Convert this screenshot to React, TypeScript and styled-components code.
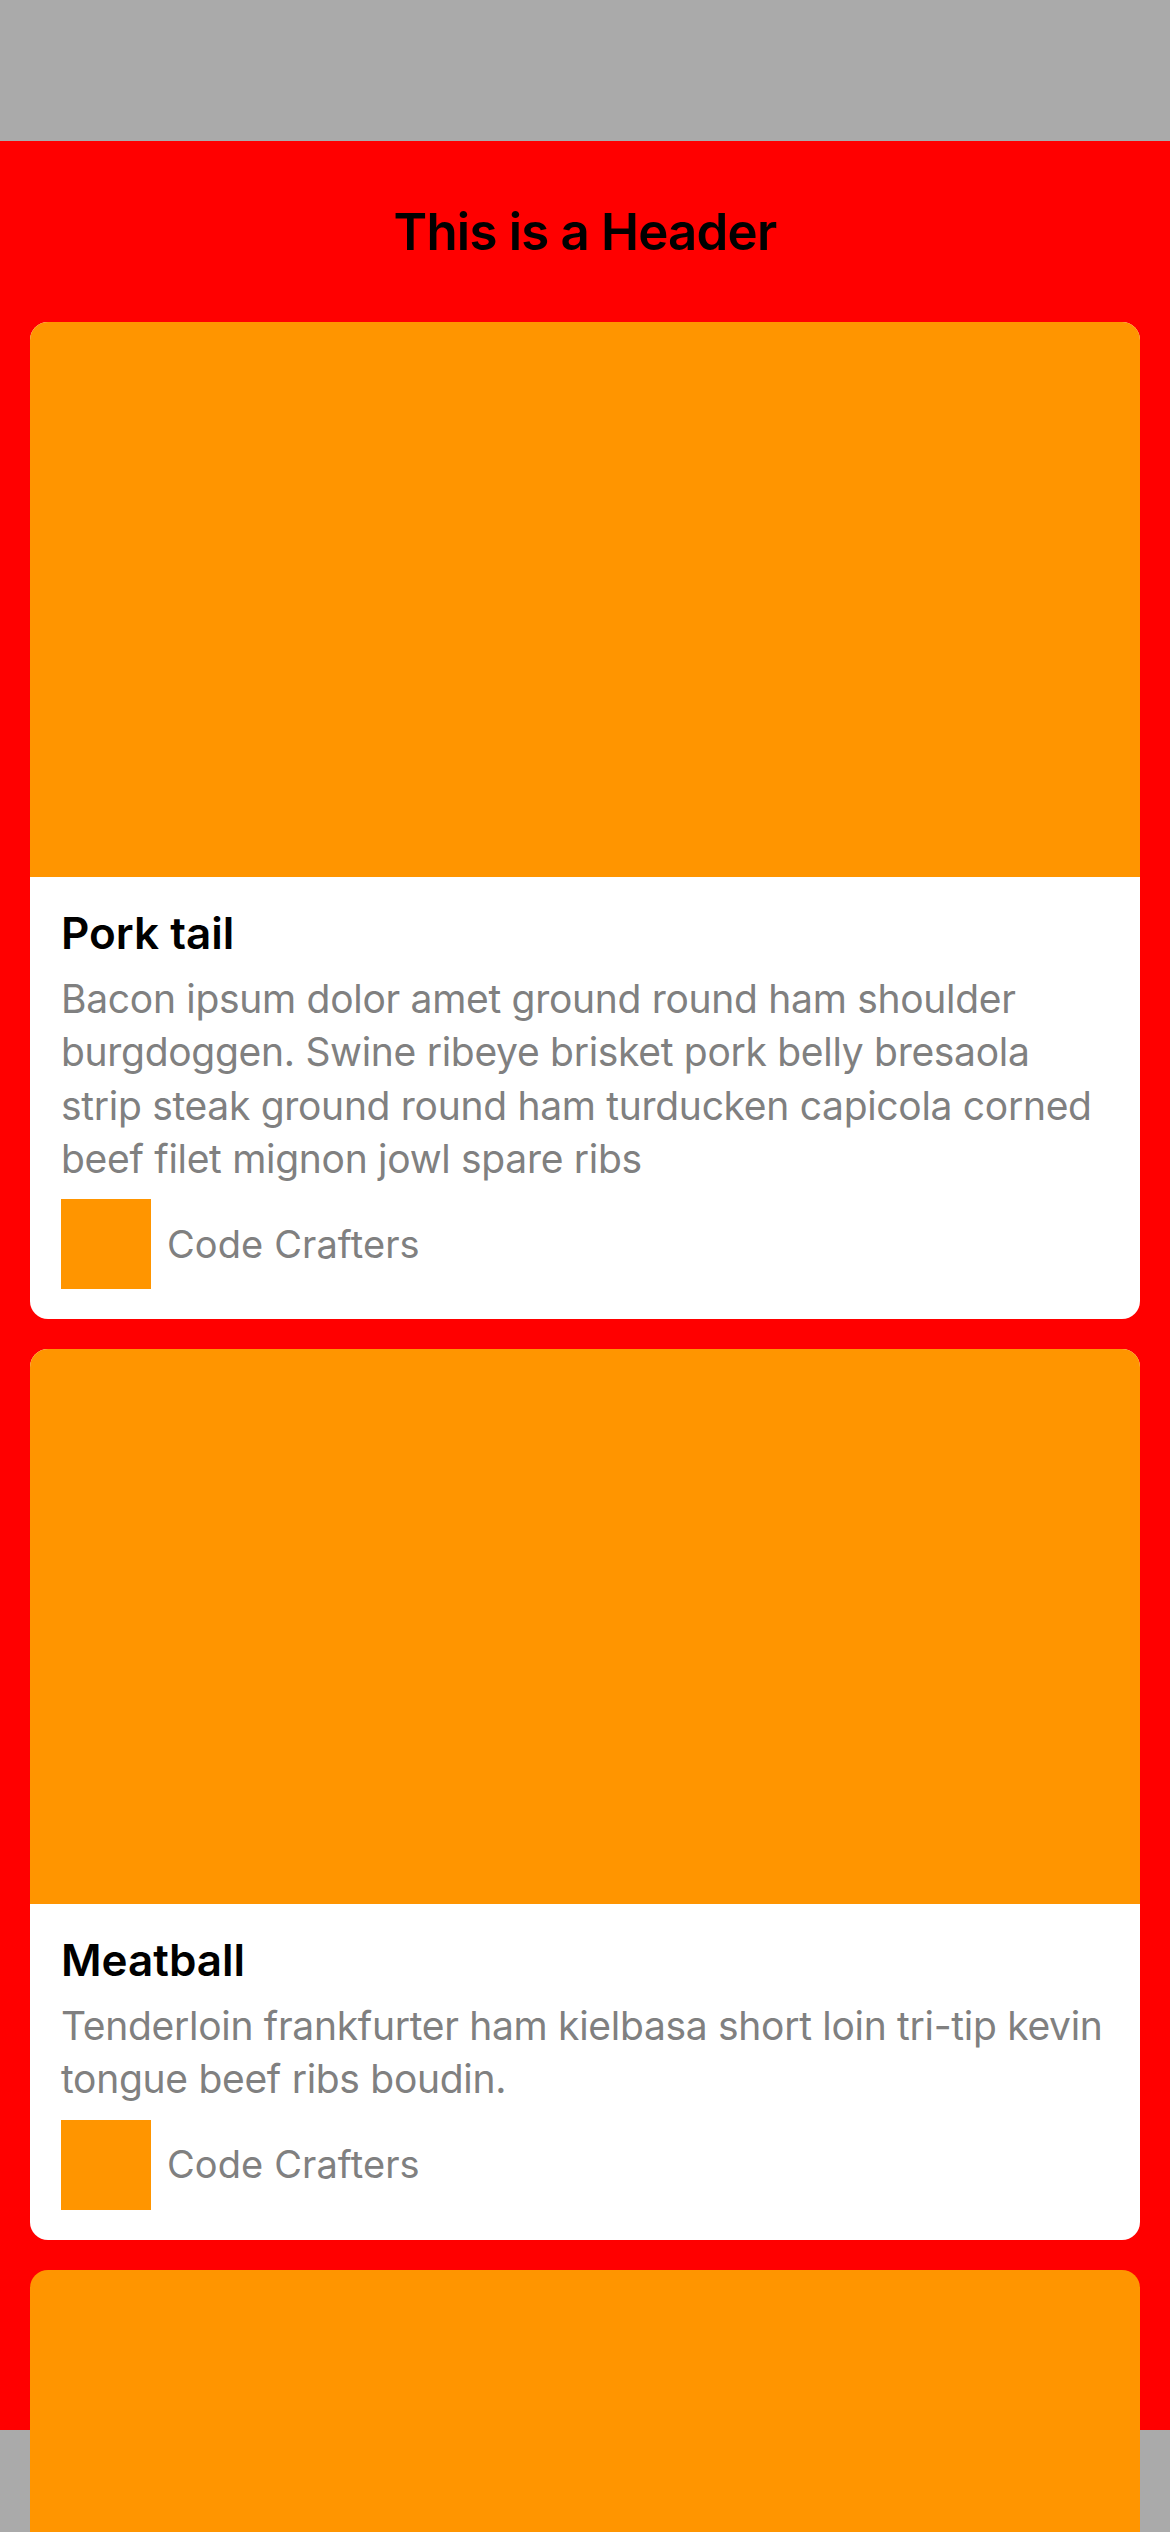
import React from "react";
import styled, { createGlobalStyle } from "styled-components";

const GlobalStyle = createGlobalStyle`
  html, body {
    margin: 0;
    padding: 0;
    background: #aaaaaa;
    overflow: hidden;
  }
  body {
    font-family: Inter, "Noto Sans", "Liberation Sans", sans-serif;
    -webkit-font-smoothing: antialiased;
  }
`;

const Screen = styled.div`
  height: 2532px;
  box-sizing: border-box;
  padding: 141px 0 102px;
  display: flex;
  flex-direction: column;
  overflow: hidden;
`;

const Content = styled.main`
  flex: 1;
  min-height: 0;
  background: #ff0000;
  display: flex;
  flex-direction: column;
`;

const Header = styled.header`
  padding: 60px 0;
  text-align: center;
`;

const HeaderTitle = styled.h1`
  margin: 0;
  font-size: 51px;
  line-height: 61px;
  font-weight: 600;
  letter-spacing: -0.8px;
  color: #000000;
`;

const CardList = styled.div`
  display: flex;
  flex-direction: column;
  gap: 30px;
  padding: 0 30px;
`;

const Card = styled.article`
  flex-shrink: 0;
  background: #ffffff;
  border-radius: 18px;
  overflow: hidden;
  display: flex;
  flex-direction: column;
`;

const CardImage = styled.div`
  height: 555px;
  background: #ff9500;
`;

const CardBody = styled.div`
  padding: 30px 31px 30px;
  display: flex;
  flex-direction: column;
`;

const CardTitle = styled.h2`
  margin: 0;
  font-size: 44px;
  line-height: 53px;
  font-weight: 600;
  color: #000000;
`;

const CardText = styled.p`
  margin: 12px 0 0;
  font-size: 39px;
  line-height: 53.3px;
  font-weight: 400;
  letter-spacing: -0.3px;
  color: #808080;
`;

const AuthorRow = styled.div`
  margin-top: 14px;
  display: flex;
  align-items: center;
  gap: 16px;
`;

const Avatar = styled.div`
  width: 90px;
  height: 90px;
  background: #ff9500;
  flex-shrink: 0;
`;

const AuthorName = styled.span`
  font-size: 38px;
  line-height: 45px;
  letter-spacing: 0.1px;
  color: #808080;
`;

type Post = { id: number; title?: string; text?: string; author?: string };

const posts: Post[] = [
  {
    id: 1,
    title: "Pork tail",
    text:
      "Bacon ipsum dolor amet ground round ham shoulder burgdoggen. Swine ribeye brisket pork belly bresaola strip steak ground round ham turducken capicola corned beef filet mignon jowl spare ribs",
    author: "Code Crafters",
  },
  {
    id: 2,
    title: "Meatball",
    text:
      "Tenderloin frankfurter ham kielbasa short loin tri-tip kevin tongue beef ribs boudin.",
    author: "Code Crafters",
  },
  { id: 3 },
];

export default function App() {
  return (
    <>
      <GlobalStyle />
      <Screen>
        <Content>
          <Header>
            <HeaderTitle>This is a Header</HeaderTitle>
          </Header>
          <CardList>
            {posts.map((p) => (
              <Card key={p.id}>
                <CardImage />
                {p.title && (
                  <CardBody>
                    <CardTitle>{p.title}</CardTitle>
                    <CardText>{p.text}</CardText>
                    <AuthorRow>
                      <Avatar />
                      <AuthorName>{p.author}</AuthorName>
                    </AuthorRow>
                  </CardBody>
                )}
              </Card>
            ))}
          </CardList>
        </Content>
      </Screen>
    </>
  );
}
